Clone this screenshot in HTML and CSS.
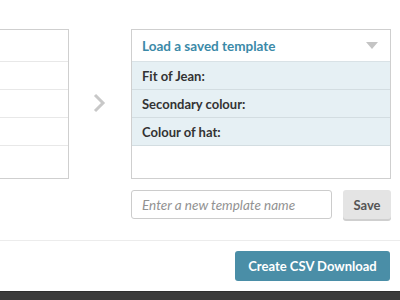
FILE: index.html
```html
<!DOCTYPE html>
<html>
<head>
<meta charset="utf-8">
<link rel="stylesheet" href="styles.css">
</head>
<body>
<div class="page">
  <div class="mapper">
    <div class="source-list">
      <div class="src-row"></div>
      <div class="src-row"></div>
      <div class="src-row"></div>
      <div class="src-row"></div>
      <div class="src-row last"></div>
    </div>
    <div class="arrow-col">
      <svg width="14" height="20" viewBox="0 0 14 20"><path d="M3 2 L11 10 L3 18" fill="none" stroke="#c8c8c8" stroke-width="3"/></svg>
    </div>
    <div class="template-col">
      <div class="template-box">
        <div class="tpl-head">
          <span>Load a saved template</span>
          <span class="caret"></span>
        </div>
        <div class="tpl-row">Fit of Jean:</div>
        <div class="tpl-row">Secondary colour:</div>
        <div class="tpl-row">Colour of hat:</div>
        <div class="tpl-empty"></div>
      </div>
      <div class="save-line">
        <input class="tpl-name" type="text" placeholder="Enter a new template name">
        <button class="save-btn">Save</button>
      </div>
    </div>
  </div>
  <div class="footer">
    <button class="csv-btn">Create CSV Download</button>
  </div>
  <div class="bottom-bar"></div>
</div>
</body>
</html>
```
FILE: styles.css
```css
* { box-sizing: border-box; }
html, body { margin: 0; padding: 0; background: #fff; overflow: hidden; }
body { font-family: Lato, "Open Sans", sans-serif; width: 400px; height: 300px; }
.page { display: flex; flex-direction: column; height: 300px; }
.mapper { display: flex; padding-top: 29px; }
.source-list {
  width: 101px; margin-left: -32px;
  border: 1px solid #cfcfcf;
  height: 150px;
  display: flex; flex-direction: column;
}
.src-row { height: 28px; border-bottom: 1px solid #e8e8e8; }
.src-row:first-child { height: 32px; }
.src-row.last { border-bottom: none; flex: 1; }
.arrow-col { width: 62px; display: flex; justify-content: center; padding-top: 64px; padding-right: 2px; }
.template-col { width: 260px; }
.template-box { border: 1px solid #cfcfcf; height: 150px; display: flex; flex-direction: column; }
.tpl-head {
  height: 32px; display: flex; align-items: center; justify-content: space-between;
  padding: 0 12px 0 10px; color: #3b8aa8; font-size: 13.5px; font-weight: 700;
  border-bottom: 1px solid #d9e2e6;
}
.caret { width: 0; height: 0; border-left: 6px solid transparent; border-right: 6px solid transparent; border-top: 7px solid #c4c4c4; }
.tpl-row {
  height: 28px; background: #e6f0f4; border-bottom: 1px solid #d3dde1;
  display: flex; align-items: center; padding: 0 10px;
  font-size: 13px; font-weight: 700; color: #333;
}
.tpl-empty { flex: 1; }
.save-line { display: flex; gap: 11px; margin-top: 11px; }
.tpl-name {
  width: 201px; height: 29px; border: 1px solid #cccccc; border-radius: 3px;
  padding: 0 10px; font-family: Lato, sans-serif; font-size: 13.5px; font-style: italic; color: #333;
}
.tpl-name::placeholder { color: #929292; font-style: italic; }
.save-btn {
  width: 48px; height: 29px; border: none; border-radius: 3px; background: #e4e4e4;
  box-shadow: 0 2px 0 #cfcfcf; font-family: Lato, sans-serif; font-weight: 700; font-size: 13px; color: #555;
  padding: 0;
}
.footer { margin-top: 21px; border-top: 1px solid #ececec; display: flex; justify-content: flex-end; padding: 10px 10px 0 0; height: 51px; }
.csv-btn {
  width: 155px; height: 30px; border: none; border-radius: 3px; background: #4a8ea7;
  color: #fff; font-family: Lato, sans-serif; font-weight: 700; font-size: 13px; padding: 0;
}
.bottom-bar { flex: 1; background: #3b3b3b; border-top: 1px solid #2e2e2e; }
```
